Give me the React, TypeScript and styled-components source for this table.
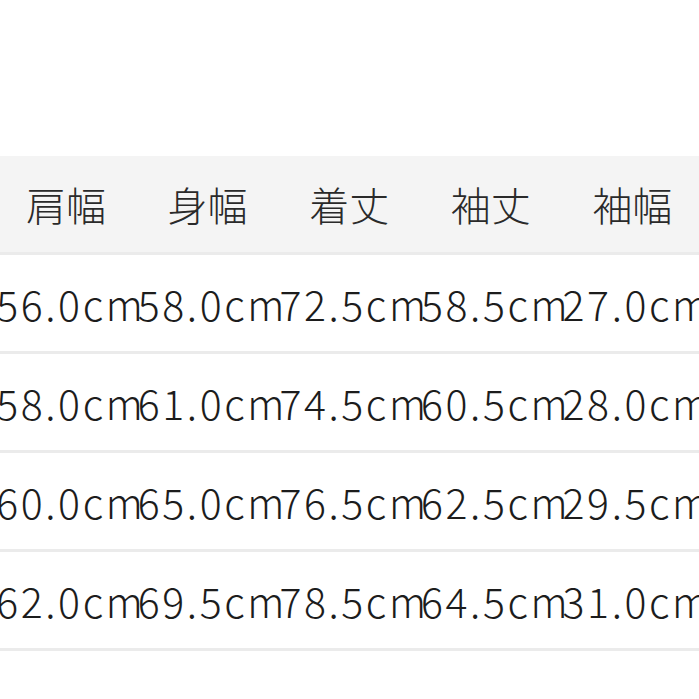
import React from 'react';
import styled, { createGlobalStyle } from 'styled-components';

const GlobalStyle = createGlobalStyle`
  html, body {
    margin: 0;
    padding: 0;
    background: #ffffff;
    overflow: hidden;
  }
  body {
    font-family: "Noto Sans CJK JP", "Noto Sans", sans-serif;
  }
`;

const Page = styled.div`
  width: 699px;
  height: 699px;
  padding-top: 156px;
  box-sizing: border-box;
  overflow: hidden;
`;

const Table = styled.div`
  display: flex;
  flex-direction: column;
  width: 708px;
`;

const Row = styled.div<{ $head?: boolean }>`
  display: grid;
  grid-template-columns: repeat(5, 141.6px);
  height: 96px;
  border-bottom: 3px solid #ebebeb;
  background: ${(p) => (p.$head ? '#f4f4f4' : '#ffffff')};
`;

const HeadCell = styled.div`
  display: flex;
  align-items: center;
  padding-left: 26px;
  font-size: 40px;
  font-weight: 300;
  color: #2a2a2a;
  white-space: nowrap;
`;

const Cell = styled.div`
  display: flex;
  align-items: center;
  justify-content: center;
  font-size: 41px;
  font-weight: 300;
  letter-spacing: 2.6px;
  color: #1c1c1c;
  white-space: nowrap;
  min-width: 0;
`;

const headers = ['肩幅', '身幅', '着丈', '袖丈', '袖幅'];

const rows = [
  ['56.0cm', '58.0cm', '72.5cm', '58.5cm', '27.0cm'],
  ['58.0cm', '61.0cm', '74.5cm', '60.5cm', '28.0cm'],
  ['60.0cm', '65.0cm', '76.5cm', '62.5cm', '29.5cm'],
  ['62.0cm', '69.5cm', '78.5cm', '64.5cm', '31.0cm'],
];

export default function App() {
  return (
    <>
      <GlobalStyle />
      <Page>
        <Table>
          <Row $head>
            {headers.map((h) => (
              <HeadCell key={h}>{h}</HeadCell>
            ))}
          </Row>
          {rows.map((r, i) => (
            <Row key={i}>
              {r.map((v, j) => (
                <Cell key={j}>{v}</Cell>
              ))}
            </Row>
          ))}
        </Table>
      </Page>
    </>
  );
}
